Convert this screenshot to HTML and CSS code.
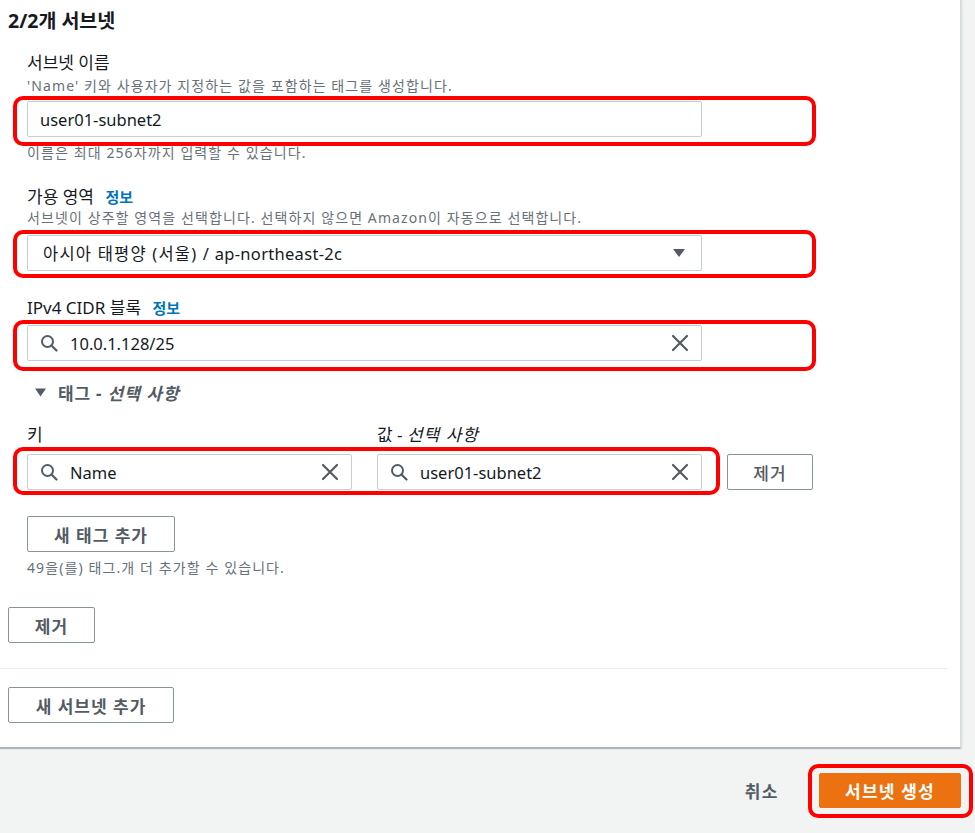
FILE: index.html
```html
<!DOCTYPE html>
<html lang="ko">
<head>
<meta charset="utf-8">
<title>서브넷 생성</title>
<link rel="stylesheet" href="styles.css">
</head>
<body>
<div class="page">
  <section class="card">
    <h2 class="title">2/2개 서브넷</h2>
    <div class="fields">
      <div class="field field-name">
        <div class="label">서브넷 이름</div>
        <div class="desc desc-name">'Name' 키와 사용자가 지정하는 값을 포함하는 태그를 생성합니다.</div>
        <div class="control control-name">
          <div class="input"><span class="value">user01-subnet2</span></div>
          <span class="mark mark-name"></span>
        </div>
        <div class="hint">이름은 최대 256자까지 입력할 수 있습니다.</div>
      </div>

      <div class="field field-az">
        <div class="label">가용 영역 <a class="info">정보</a></div>
        <div class="desc">서브넷이 상주할 영역을 선택합니다. 선택하지 않으면 Amazon이 자동으로 선택합니다.</div>
        <div class="control control-az">
          <div class="input select">
            <span class="value"><span class="ko">아시아 태평양 (서울) /</span> ap-northeast-2c</span>
            <svg class="caret" width="14" height="10" viewBox="0 0 14 10"><path d="M1 1h12L7 9z" fill="#545b64"/></svg>
          </div>
          <span class="mark mark-az"></span>
        </div>
      </div>

      <div class="field field-cidr">
        <div class="label">IPv4 CIDR 블록 <a class="info">정보</a></div>
        <div class="control control-cidr">
          <div class="input search">
            <svg class="icon-search" width="18" height="18" viewBox="0 0 18 18"><circle cx="7.5" cy="7.5" r="5.5" fill="none" stroke="#545b64" stroke-width="2"/><path d="M11.5 11.5L16.5 16.5" stroke="#545b64" stroke-width="2.2" stroke-linecap="round"/></svg>
            <span class="value">10.0.1.128/25</span>
            <svg class="icon-x" width="18" height="18" viewBox="0 0 18 18"><path d="M2 2L16 16M16 2L2 16" stroke="#545b64" stroke-width="2.2" stroke-linecap="round"/></svg>
          </div>
          <span class="mark mark-cidr"></span>
        </div>
      </div>

      <div class="tags-toggle">
        <svg class="toggle-caret" width="11" height="9" viewBox="0 0 11 9"><path d="M0 0.5h11L5.5 8.5z" fill="#545b64"/></svg>
        <span class="toggle-text">태그 - <i>선택 사항</i></span>
      </div>

      <div class="tag-labels">
        <div class="label tag-col">키</div>
        <div class="label tag-col">값 - <i>선택 사항</i></div>
      </div>

      <div class="tag-row">
        <div class="tag-pair">
          <div class="input search tag-col">
            <svg class="icon-search" width="18" height="18" viewBox="0 0 18 18"><circle cx="7.5" cy="7.5" r="5.5" fill="none" stroke="#545b64" stroke-width="2"/><path d="M11.5 11.5L16.5 16.5" stroke="#545b64" stroke-width="2.2" stroke-linecap="round"/></svg>
            <span class="value">Name</span>
            <svg class="icon-x" width="18" height="18" viewBox="0 0 18 18"><path d="M2 2L16 16M16 2L2 16" stroke="#545b64" stroke-width="2.2" stroke-linecap="round"/></svg>
          </div>
          <div class="input search tag-col">
            <svg class="icon-search" width="18" height="18" viewBox="0 0 18 18"><circle cx="7.5" cy="7.5" r="5.5" fill="none" stroke="#545b64" stroke-width="2"/><path d="M11.5 11.5L16.5 16.5" stroke="#545b64" stroke-width="2.2" stroke-linecap="round"/></svg>
            <span class="value">user01-subnet2</span>
            <svg class="icon-x" width="18" height="18" viewBox="0 0 18 18"><path d="M2 2L16 16M16 2L2 16" stroke="#545b64" stroke-width="2.2" stroke-linecap="round"/></svg>
          </div>
          <span class="mark mark-tags"></span>
        </div>
        <button class="btn btn-tag-remove">제거</button>
      </div>

      <button class="btn btn-add-tag">새 태그 추가</button>
      <div class="hint hint-tags">49을(를) 태그.개 더 추가할 수 있습니다.</div>
    </div>

    <button class="btn btn-remove">제거</button>
    <hr class="divider">
    <button class="btn btn-add-subnet">새 서브넷 추가</button>
  </section>

  <footer class="footer">
    <button class="link-btn">취소</button>
    <div class="primary-wrap">
      <button class="btn-primary">서브넷 생성</button>
      <span class="mark mark-primary"></span>
    </div>
  </footer>
</div>
</body>
</html>
```
FILE: styles.css
```css
html, body {
  margin: 0;
  padding: 0;
}
body {
  background: #f2f3f3;
  font-family: "Noto Sans", "Noto Sans CJK KR", sans-serif;
  color: #16191f;
}
.page {
  width: 975px;
  height: 833px;
  overflow: hidden;
}
.card {
  width: 961px;
  box-sizing: border-box;
  background: #fff;
  border-right: 1px solid #d5dbdb;
  border-bottom: 2px solid #aab7b8;
  box-shadow: 1px 0 2px rgba(0, 28, 36, 0.12);
  padding: 10px 0 24px 8px;
}
.title {
  margin: 0;
  font-size: 19.5px;
  line-height: 22px;
  font-weight: 700;
  color: #16191f;
}
.fields {
  padding-left: 19px;
}
.label {
  font-size: 17px;
  line-height: 22px;
  color: #16191f;
}
.info {
  margin-left: 7px;
  font-size: 15px;
  font-weight: 700;
  color: #0073bb;
}
.desc, .hint {
  font-size: 14px;
  line-height: 20px;
  letter-spacing: 1.1px;
  color: #687078;
}
.field-name { margin-top: 20px; }
.desc-name { margin-top: 2px; }
.control { position: relative; width: 675px; }
.control-name { margin-top: 5px; }
.field-name .hint { margin-top: 6px; }
.field-az { margin-top: 23px; }
.control-az { margin-top: 7px; }
.field-cidr { margin-top: 26px; }
.control-cidr { margin-top: 6px; }

.input {
  box-sizing: border-box;
  height: 36px;
  border: 1px solid #c6cfd0;
  border-radius: 2px;
  background: #fff;
  display: flex;
  align-items: center;
  padding: 0 12px;
  font-size: 16.5px;
  color: #16191f;
}
.input .value {
  flex: 1;
  white-space: nowrap;
}
.select { padding-left: 15px; padding-right: 15px; }
.select .value { font-size: 16.5px; letter-spacing: 0.3px; }
.select .ko { letter-spacing: 1.2px; }
.caret { flex: none; }
.icon-search { flex: none; margin-right: 12px; }
.icon-x { flex: none; }

.mark {
  position: absolute;
  border: 4px solid #ff0000;
  border-radius: 10px;
  pointer-events: none;
}
.mark-name { left: -14px; right: -114px; top: -5px; bottom: -9px; }
.mark-az { left: -14px; right: -114px; top: -5px; bottom: -7px; }
.mark-cidr { left: -14px; right: -114px; top: -5px; bottom: -10px; }
.mark-tags { left: -14px; right: -18px; top: -7px; bottom: -5px; }
.mark-primary { left: -11px; right: -12px; top: -9px; bottom: -10px; }

.tags-toggle {
  margin-top: 20px;
  display: flex;
  align-items: center;
  height: 22px;
  padding-left: 8px;
  gap: 12px;
}
.toggle-text {
  font-size: 17px;
  font-weight: 700;
  letter-spacing: 0.8px;
  color: #545b64;
}
.tag-labels {
  margin-top: 21px;
  display: flex;
  gap: 25px;
}
.tag-col { width: 325px; }
.tag-labels i, .toggle-text i { font-style: italic; letter-spacing: 1px; }
.tag-row {
  margin-top: 8px;
  display: flex;
  align-items: center;
  gap: 25px;
}
.tag-pair {
  position: relative;
  display: flex;
  gap: 25px;
}

.btn {
  display: block;
  box-sizing: border-box;
  height: 36px;
  padding: 0;
  border: 1px solid #879596;
  border-radius: 2px;
  background: #fff;
  font-family: "Noto Sans", "Noto Sans CJK KR", sans-serif;
  font-size: 17px;
  font-weight: 700;
  letter-spacing: 1px;
  color: #545b64;
}
.btn-tag-remove { width: 86px; font-weight: 500; }
.btn-add-tag { width: 148px; margin-top: 26px; }
.hint-tags { margin-top: 6px; }
.btn-remove { width: 87px; margin-top: 29px; }
.divider {
  margin: 25px 0 0 -8px;
  width: 948px;
  border: 0;
  border-top: 1px solid #eaeded;
  height: 0;
}
.btn-add-subnet { width: 166px; margin-top: 18px; }

.footer {
  width: 961px;
  display: flex;
  justify-content: flex-end;
  align-items: center;
  gap: 40px;
  padding-top: 24px;
}
.link-btn {
  border: 0;
  background: none;
  padding: 0;
  font-family: "Noto Sans", "Noto Sans CJK KR", sans-serif;
  font-size: 17px;
  font-weight: 700;
  letter-spacing: 1.5px;
  color: #545b64;
}
.primary-wrap { position: relative; }
.btn-primary {
  display: block;
  box-sizing: border-box;
  width: 142px;
  height: 35px;
  border: 1px solid #ec7211;
  border-radius: 2px;
  background: #ec7211;
  color: #fff;
  font-family: "Noto Sans", "Noto Sans CJK KR", sans-serif;
  font-size: 17px;
  font-weight: 700;
  letter-spacing: 1.2px;
  padding: 0;
}
```
